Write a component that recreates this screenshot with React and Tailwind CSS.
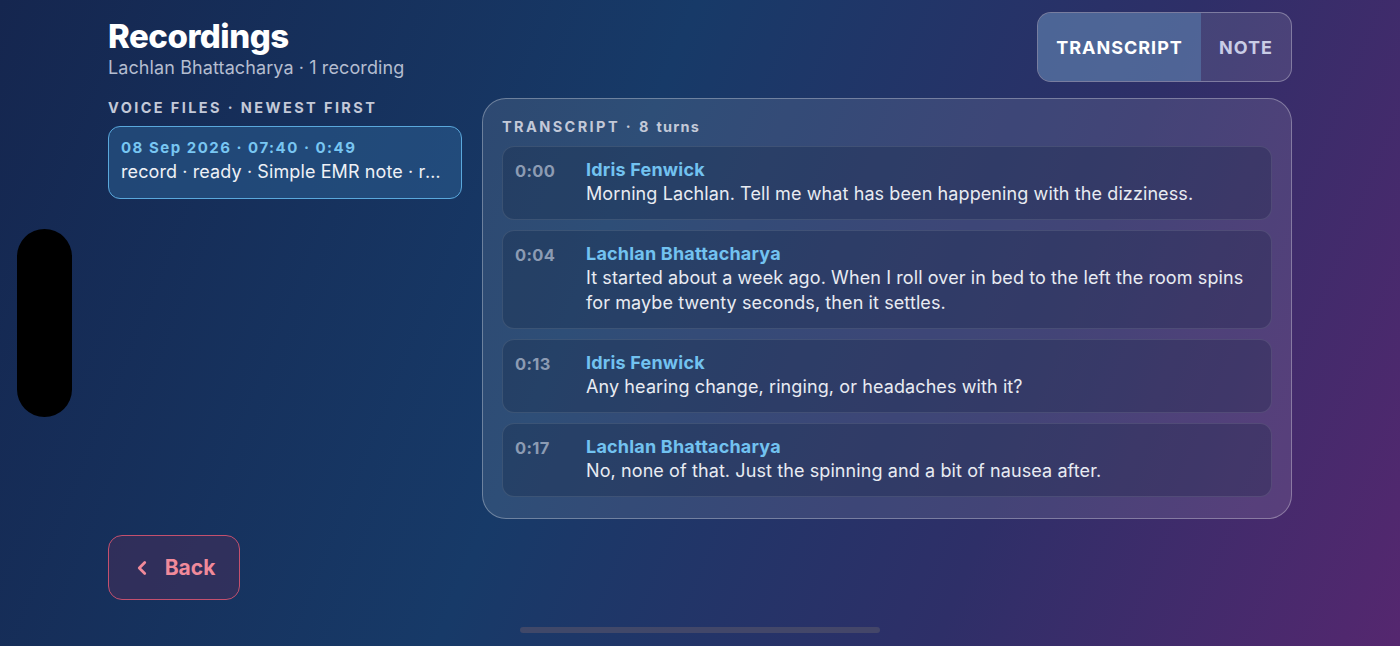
import { ChevronLeft } from "lucide-react";

const turns = [
  { t: "0:00", who: "Idris Fenwick", text: "Morning Lachlan. Tell me what has been happening with the dizziness." },
  {
    t: "0:04",
    who: "Lachlan Bhattacharya",
    text: "It started about a week ago. When I roll over in bed to the left the room spins for maybe twenty seconds, then it settles.",
  },
  { t: "0:13", who: "Idris Fenwick", text: "Any hearing change, ringing, or headaches with it?" },
  { t: "0:17", who: "Lachlan Bhattacharya", text: "No, none of that. Just the spinning and a bit of nausea after." },
];

function Turn({ t, who, text }) {
  return (
    <div className="flex rounded-[12px] border border-white/10 bg-[#0b1a36]/25 pl-[12px] pr-6 pt-[12px] pb-[13px]">
      <div className="w-[71px] shrink-0 pt-[1px] text-[16.5px] font-bold leading-[22px] tracking-[0.3px] text-[#8c9bb3]">{t}</div>
      <div className="min-w-0">
        <div className="text-[18px] font-bold leading-[22px] tracking-[0.2px] text-[#72c2f0]">{who}</div>
        <p className="text-[18px] leading-[25px] tracking-[0.1px] text-[#e8ebf2]">{text}</p>
      </div>
    </div>
  );
}

export default function App() {
  return (
    <div
      className="relative h-[646px] w-[1400px] overflow-hidden bg-[linear-gradient(112deg,#15264f_0%,#173a68_42%,#2e2f68_72%,#55276f_100%)] text-white"
      style={{ fontFamily: "Inter, 'Noto Sans', sans-serif" }}
    >
      <div className="absolute left-[17px] top-[229px] h-[188px] w-[55px] rounded-full bg-black" />

      <div className="flex flex-col px-[108px] pt-[12px]">
        <div className="flex items-start justify-between">
          <div className="pt-[5px]">
            <h1 className="text-[33px] font-extrabold leading-[38px] tracking-[-0.5px]">Recordings</h1>
            <p className="mt-[1px] text-[18px] leading-[24px] tracking-[0.1px] text-[#b4bdd0]">
              Lachlan Bhattacharya · 1 recording
            </p>
          </div>
          <div className="flex h-[70px] overflow-hidden rounded-[14px] border border-white/30 bg-white/10">
            <div className="flex w-[163px] items-center justify-center bg-[#5a7fb0]/55 pt-[1px] text-[18px] font-bold tracking-[1px] text-white">
              TRANSCRIPT
            </div>
            <div className="flex w-[90px] items-center justify-center pt-[1px] text-[18px] font-bold tracking-[1px] text-[#c9cde6]">
              NOTE
            </div>
          </div>
        </div>

        <div className="mt-[16px] flex items-start gap-[20px]">
          <div className="w-[354px] shrink-0">
            <div className="pt-[2px] text-[14.5px] font-bold leading-[16px] tracking-[2.4px] text-[#c3c9d8]">
              VOICE FILES · NEWEST FIRST
            </div>
            <div className="mt-[10px] rounded-[12px] border border-[#5aa8dc] bg-[#2a5a8c]/60 px-[12px] pt-[11px] pb-[13px]">
              <div className="text-[15px] font-bold leading-[20px] tracking-[1.5px] text-[#78c6f2]">
                08 Sep 2026 · 07:40 · 0:49
              </div>
              <div className="truncate pt-[1px] text-[18px] leading-[26px] tracking-[0.1px] text-[#eef1f6]">
                record · ready · Simple EMR note · recorded in clinic
              </div>
            </div>
          </div>

          <div className="flex-1 rounded-[24px] border border-white/30 bg-white/10 px-[19px] pt-[20px] pb-[21px]">
            <div className="text-[14.5px] font-bold leading-[16px] tracking-[2.4px] text-[#c3c9d8]">
              TRANSCRIPT · 8 <span className="tracking-[1.2px]">turns</span>
            </div>
            <div className="mt-[11px] flex flex-col gap-[10px]">
              {turns.map((x) => (
                <Turn key={x.t} {...x} />
              ))}
            </div>
          </div>
        </div>

        <div className="mt-[16px]">
          <button className="flex h-[65px] w-[132px] items-center justify-center gap-[12px] rounded-[14px] border border-[#c4506e] bg-[#4a2d5a]/50 pr-[2px] text-[21px] font-bold text-[#f08a9a]">
            <ChevronLeft size={22} strokeWidth={3} />
            Back
          </button>
        </div>
      </div>

      <div className="absolute left-[520px] top-[627px] h-[6px] w-[360px] rounded-full bg-[#50506a]/70" />
    </div>
  );
}
